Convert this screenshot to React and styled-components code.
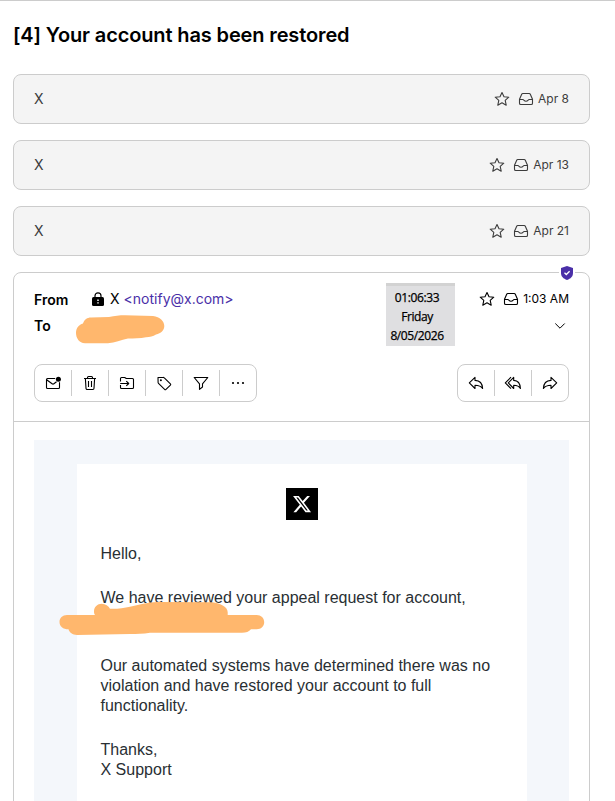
import React from 'react'
import styled, { createGlobalStyle } from 'styled-components'

const mails = [
  { from: 'X', date: 'Apr 8' },
  { from: 'X', date: 'Apr 13' },
  { from: 'X', date: 'Apr 21' },
]

const StarIcon = () => (
  <Icon width="16" height="16" viewBox="0 0 16 16">
    <path d="M8 1.5l2 4.2 4.8.5-3.6 3.2 1 4.8L8 11.8l-4.2 2.4 1-4.8L1.2 6.2l4.8-.5z" />
  </Icon>
)

const InboxIcon = () => (
  <Icon width="16" height="16" viewBox="0 0 16 16">
    <path d="M4.8 2.5h6.4a1.2 1.2 0 0 1 1.1.7l2.2 5v4a1.3 1.3 0 0 1-1.3 1.3H2.8a1.3 1.3 0 0 1-1.3-1.3v-4l2.2-5a1.2 1.2 0 0 1 1.1-.7z" />
    <path d="M1.6 8.5h3.1c.8 0 1 .4 1.4.9.9 1.2 2.9 1.2 3.8 0 .4-.5.6-.9 1.4-.9h3.1" />
  </Icon>
)

const LockIcon = () => (
  <svg width="12" height="14" viewBox="0 0 12 14">
    <path d="M3 6V3.8a3 3 0 0 1 6 0V6" fill="none" stroke="#000" strokeWidth="1.2" />
    <rect x="0" y="5" width="12" height="9" rx="1.5" fill="#000" />
    <path d="M6 7.5v1.6M6 10.2v1.3" stroke="#fff" strokeWidth="1.5" />
  </svg>
)

const MailDotIcon = () => (
  <Icon width="16" height="16" viewBox="0 0 16 16">
    <path d="M10.2 3.5H2.5a1 1 0 0 0-1 1v8a1 1 0 0 0 1 1h11a1 1 0 0 0 1-1V7.2M1.6 4.7l5.5 4.1a1.5 1.5 0 0 0 1.8 0l2.6-2" />
    <circle cx="13.4" cy="4.2" r="2.5" fill="#000" stroke="none" />
  </Icon>
)

const TrashIcon = () => (
  <Icon width="16" height="16" viewBox="0 0 16 16">
    <path d="M2 3.5h12M5.5 3.3v-.8a1 1 0 0 1 1-1h3a1 1 0 0 1 1 1v.8M3.4 3.7l.6 9.6a1.2 1.2 0 0 0 1.2 1.2h5.6a1.2 1.2 0 0 0 1.2-1.2l.6-9.6M6.5 6v6M9.5 6v6" />
  </Icon>
)

const MoveIcon = () => (
  <Icon width="16" height="16" viewBox="0 0 16 16">
    <path d="M1.5 6.5v-3a1 1 0 0 1 1-1h3.2l1.6 1h6.2a1 1 0 0 1 1 1v8a1 1 0 0 1-1 1h-11a1 1 0 0 1-1-1V10M1.2 8.5h8.3M7.3 6.1l2.4 2.4-2.4 2.4" />
  </Icon>
)

const TagIcon = () => (
  <Icon width="16" height="16" viewBox="0 0 16 16">
    <path d="M2 2.5l5.3-.1a1.3 1.3 0 0 1 1 .4l6.1 6a1 1 0 0 1 0 1.4l-4.4 4.2a1 1 0 0 1-1.4 0L2.5 8.4a1.3 1.3 0 0 1-.4-1z" />
    <circle cx="4.9" cy="5.3" r="1" fill="#000" stroke="none" />
  </Icon>
)

const FilterIcon = () => (
  <Icon width="16" height="16" viewBox="0 0 16 16">
    <path d="M1.2 2.5h13.6L9.5 8.8V12l-3 2.4V8.8z" />
  </Icon>
)

const DotsIcon = () => (
  <svg width="16" height="16" viewBox="0 0 16 16">
    <circle cx="3" cy="8" r="1.1" />
    <circle cx="8" cy="8" r="1.1" />
    <circle cx="13" cy="8" r="1.1" />
  </svg>
)

const ReplyIcon = ({ flip }) => (
  <Icon width="16" height="16" viewBox="0 0 16 16">
    <path
      transform={flip ? 'translate(16 0) scale(-1 1)' : undefined}
      d="M1.3 7.9L7 2.4v3c4.6.2 7.4 2.8 7.6 8.1C13 11 10.7 10.2 7 10.2v3.3z"
    />
  </Icon>
)

const ReplyAllIcon = () => (
  <Icon width="18" height="16" viewBox="0 0 18 16">
    <path d="M7 2.2L1.3 7.9 7 13.6M4.3 7.9L9.7 2.4v3c4.3.2 6.5 2.8 6.7 8.1-1.3-2.5-3.3-3.3-6.7-3.3v3.3z" />
  </Icon>
)

const XLogo = () => (
  <svg width="20" height="20" viewBox="0 0 24 24" fill="#fff">
    <path d="M18.244 2.25h3.308l-7.227 8.26 8.502 11.24H16.17l-5.214-6.817L4.99 21.75H1.68l7.73-8.835L1.254 2.25H8.08l4.713 6.231zm-1.161 17.52h1.833L7.084 4.126H5.117z" />
  </svg>
)

export default function App() {
  return (
    <>
      <GlobalStyle />
      <Page>
        <h1>[4] Your account has been restored</h1>
        <Thread>
          {mails.map((mail) => (
            <Collapsed key={mail.date}>
              <span>{mail.from}</span>
              <Meta $muted>
                <StarIcon />
                <InboxIcon />
                <time>{mail.date}</time>
              </Meta>
            </Collapsed>
          ))}

          <Message>
            <Shield>
              <svg width="12" height="14" viewBox="0 0 12 14">
                <path d="M6 0l6 2v5c0 3.5-2.4 5.7-6 7-3.6-1.3-6-3.5-6-7V2z" fill="#4a2fa8" />
                <path d="M3.5 6.7l1.8 1.8 3.3-3.3" fill="none" stroke="#fff" strokeWidth="1.3" />
              </svg>
            </Shield>
            <Clock>
              <span>01:06:33</span>
              <span>Friday</span>
              <span>8/05/2026</span>
            </Clock>
            <Header>
              <Line>
                <Label>From</Label>
                <Sender>
                  <LockIcon />
                  <span>X</span>
                  <a>&lt;notify@x.com&gt;</a>
                </Sender>
                <Meta>
                  <StarIcon />
                  <InboxIcon />
                  <time>1:03 AM</time>
                </Meta>
              </Line>
              <Line>
                <Label>To</Label>
                <Chevron width="12" height="8" viewBox="0 0 12 8">
                  <path d="M1.3 1.5L6 6.2l4.7-4.7" />
                </Chevron>
              </Line>
              <Scribble $left={61} $top={42} width="90" height="29" viewBox="0 0 90 29">
                <path d="M1 18C1 13 4 9.5 8 8.5 9.5 4.5 12 2.7 16 2.6L34 2C40 .8 44 .3 50 .3L78 1C85 2 89.3 6 89.3 11 89.3 15 86 18.5 81 19.5 78 21.5 75 22 71 22.2 65 23.6 59 23.3 53 23.5 46 25 40 28 33 28.2L10 28.2C4 28 1 23 1 18z" />
              </Scribble>
            </Header>
            <Toolbar>
              <Group>
                <button><MailDotIcon /></button>
                <button><TrashIcon /></button>
                <button><MoveIcon /></button>
                <button><TagIcon /></button>
                <button><FilterIcon /></button>
                <button><DotsIcon /></button>
              </Group>
              <Group>
                <button><ReplyIcon /></button>
                <button><ReplyAllIcon /></button>
                <button><ReplyIcon flip /></button>
              </Group>
            </Toolbar>
            <Body>
              <Letter>
                <Logo><XLogo /></Logo>
                <p>Hello,</p>
                <Redacted>
                  We have reviewed your appeal request for account,
                </Redacted>
                <p>
                  Our automated systems have determined there was no
                  violation and have restored your account to full
                  functionality.
                </p>
                <p>
                  Thanks,
                  <br />
                  X Support
                </p>
              </Letter>
            </Body>
            <Scribble $left={45} $top={328} width="206" height="35" viewBox="59 601 206 35">
              <path d="M94 611.5C94 607 97.5 603.8 101.7 603.8 105.5 603.8 108.5 606 110 608.7 117 609 124 608 130 606.7 139 605 147 602.3 157 602L212 602.3C221 603.5 227.5 607 227.7 612.3V615H256.7C261 615 264.2 618 264.2 622.3 264.2 626.5 261 629.3 256.7 629.3H251C249 631.8 246 632.8 242 632.8H150C143 634 137 634 130 634L77 635C72.5 635 69.5 632.5 68.5 629.3 63 629.3 59.5 626.5 59.5 622 59.5 618 62.5 615 67 615H95C94.3 614 94 613 94 611.5z" />
            </Scribble>
          </Message>
        </Thread>
      </Page>
    </>
  )
}

const GlobalStyle = createGlobalStyle`
  * {
    box-sizing: border-box;
  }
  body {
    margin: 0;
    background: #fff;
    color: #000;
    font-family: Inter, "Liberation Sans", sans-serif;
    font-size: 14px;
  }
`

const Icon = styled.svg`
  fill: none;
  stroke: currentColor;
  stroke-width: 1.1;
  stroke-linejoin: round;
  flex: none;
`

const Page = styled.main`
  height: 801px;
  overflow: hidden;
  border-top: 1px solid #ccc;
  padding: 22px 25px 0 13px;
  h1 {
    margin: 0 0 27px;
    font-size: 20px;
    line-height: 24px;
    font-weight: 600;
    letter-spacing: -0.13px;
  }
`

const Thread = styled.div`
  display: flex;
  flex-direction: column;
  gap: 16px;
`

const Collapsed = styled.article`
  display: flex;
  align-items: center;
  justify-content: space-between;
  height: 50px;
  padding: 0 20px;
  border: 1px solid #ccc;
  border-radius: 8px;
  background: #f4f4f4;
  color: #3c3c3c;
  > span {
    padding-bottom: 1px;
  }
`

const Meta = styled.div`
  display: flex;
  align-items: center;
  gap: 8px;
  margin-left: auto;
  font-size: 12px;
  color: ${(props) => (props.$muted ? '#3c3c3c' : '#000')};
  time {
    margin-left: -4px;
    padding-bottom: 2px;
  }
`

const Message = styled.article`
  position: relative;
  height: 560px;
  border: 1px solid #ccc;
  border-radius: 8px;
`

const Shield = styled.div`
  position: absolute;
  top: -7px;
  right: 14px;
  display: flex;
  padding: 0 2px;
  background: #fff;
`

const Clock = styled.div`
  position: absolute;
  top: 10px;
  left: 372px;
  width: 69px;
  height: 63px;
  padding: 2px 7px 0 0;
  border-top: 3px solid #d2d2d2;
  background: #dfdfe1;
  display: flex;
  flex-direction: column;
  align-items: center;
  font-family: "Open Sans", "Noto Sans", sans-serif;
  font-size: 12px;
  line-height: 19px;
  letter-spacing: -0.4px;
  -webkit-text-stroke: 0.25px #000;
`

const Header = styled.div`
  display: flex;
  flex-direction: column;
  padding: 13px 20px 0;
`

const Line = styled.div`
  display: flex;
  align-items: center;
  height: 26px;
`

const Label = styled.span`
  width: 58px;
  padding-top: 1px;
  font-weight: 600;
`

const Sender = styled.div`
  display: flex;
  align-items: center;
  svg {
    margin-right: 6px;
  }
  span,
  a {
    padding-bottom: 2px;
  }
  a {
    margin-left: 4px;
    color: #4a2fa8;
  }
`

const Chevron = styled.svg`
  margin: 2px 3px 0 auto;
  fill: none;
  stroke: #000;
  stroke-width: 1;
`

const Scribble = styled.svg`
  position: absolute;
  left: ${(props) => props.$left}px;
  top: ${(props) => props.$top}px;
  fill: #ffb76d;
`

const Toolbar = styled.div`
  display: flex;
  justify-content: space-between;
  padding: 26px 20px 19px;
  border-bottom: 1px solid #ccc;
`

const Group = styled.div`
  display: flex;
  align-items: center;
  height: 38px;
  border: 1px solid #ccc;
  border-radius: 8px;
  button {
    display: flex;
    align-items: center;
    justify-content: center;
    width: 37px;
    height: 26px;
    padding: 0;
    border: 0;
    border-right: 1px solid #ccc;
    background: none;
    color: #000;
  }
  button:last-child {
    width: 36px;
    border-right: 0;
  }
`

const Body = styled.div`
  margin: 18px 20px 0;
  padding: 24px 42px 0 43px;
  background: #f4f7fb;
`

const Letter = styled.div`
  height: 380px;
  padding: 24px 24px 24px 23.5px;
  background: #fff;
  color: #292f33;
  font-family: "Liberation Sans", Arial, sans-serif;
  font-size: 16px;
  line-height: 20px;
  p {
    margin: 0 0 24px;
  }
`

const Logo = styled.div`
  display: flex;
  align-items: center;
  justify-content: center;
  width: 32px;
  height: 32px;
  margin: 0 auto 24px;
  background: #000;
`

const Redacted = styled.p`
  && {
    margin-bottom: 48px;
  }
`
